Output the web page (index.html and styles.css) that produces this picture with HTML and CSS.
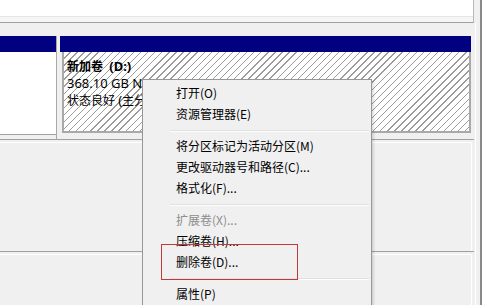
FILE: index.html
```html
<!DOCTYPE html>
<html lang="zh-CN">
<head>
  <meta charset="UTF-8" />
  <title>磁盘管理</title>
  <link rel="stylesheet" href="styles.css">
</head>
<body>
  <div class="window">
    <div class="list-pane"></div>

    <div class="graph-pane">
      <div class="disk-row">
        <div class="disk-label">
          <div class="bar"></div>
          <div class="label-box"></div>
        </div>
        <div class="partition">
          <div class="bar"></div>
          <div class="part-box">
            <div class="part-name">新加卷 &nbsp;<span class="latin">(D:)</span></div>
            <div><span class="latin">368.10 GB NTFS</span></div>
            <div>状态良好 <span class="latin">(</span>主分区<span class="latin">)</span></div>
          </div>
        </div>
      </div>
      <div class="disk-row empty"><div class="inner"></div></div>
      <div class="disk-row empty last"><div class="inner"></div></div>
    </div>

    <div class="context-menu">
      <div class="item">打开(O)</div>
      <div class="item">资源管理器(E)</div>
      <div class="sep"></div>
      <div class="item">将分区标记为活动分区(M)</div>
      <div class="item">更改驱动器号和路径(C)...</div>
      <div class="item">格式化(F)...</div>
      <div class="sep"></div>
      <div class="item disabled">扩展卷(X)...</div>
      <div class="item">压缩卷(H)...</div>
      <div class="item">删除卷(D)...</div>
      <div class="sep"></div>
      <div class="item">属性(P)</div>
      <div class="highlight"></div>
    </div>
  </div>
</body>
</html>
```

FILE: styles.css
```css
* {
  box-sizing: border-box;
}

html, body {
  margin: 0;
  height: 305px;
  overflow: hidden;
  background: #fff;
}

body {
  font-family: "Noto Sans", "Noto Sans CJK SC", sans-serif;
  font-size: 12px;
  color: #000;
}

.window {
  position: relative;
  width: 482px;
  height: 305px;
  overflow: hidden;
  background: #f0f0f0;
  border-right: 2px solid #8a8a8a;
}

.list-pane {
  width: 474px;
  height: 23px;
  background: #fff;
  border-bottom: 1px solid #a0a0a0;
  border-right: 1px solid #b8b8b8;
  box-shadow: inset 0 -5px 0 #f6f6f6, inset 0 -6px 0 #e6e6e6;
}

.graph-pane {
  width: 476px;
  padding-top: 13px;
  border-right: 1px solid #fff;
}

.disk-row {
  display: flex;
  width: 474px;
  height: 104px;
  border-bottom: 1px solid #a0a0a0;
}

.bar {
  height: 16px;
  background: #000080;
}

.disk-label {
  width: 57px;
  border-right: 1px solid #a8a8a8;
}

.label-box {
  height: 83px;
  background: #fff;
  border-bottom: 1px solid #a0a0a0;
}

.partition {
  width: 411px;
  margin-left: 3px;
}

.part-box {
  height: 81px;
  margin-left: 2px;
  padding: 6px 0 0 3px;
  line-height: 17px;
  border: 2px solid #a9a9a9;
  border-top: none;
  white-space: nowrap;
  overflow: hidden;
  background: repeating-linear-gradient(135deg, #fff 0, #fff 4px, #9c9c9c 4px, #9c9c9c 5px);
}

.part-box .latin {
  font-size: 13px;
}

.part-name {
  font-weight: bold;
}

.disk-row.empty {
  height: 112px;
  padding: 2px 2px 0 0;
}

.disk-row.empty .inner {
  width: 100%;
  height: 100%;
  border-top: 1px solid #fff;
  border-right: 1px solid #fff;
}

.disk-row.last {
  border-bottom: none;
}

.context-menu {
  position: absolute;
  left: 142px;
  top: 79px;
  width: 230px;
  height: 226px;
  padding: 2px;
  background: #f0f0f0;
  border: 1px solid #979797;
  border-bottom: none;
  font-family: "Noto Sans CJK SC", sans-serif;
  box-shadow: 2px 2px 2px rgba(0, 0, 0, 0.12);
}

.item {
  height: 21px;
  line-height: 21px;
  padding-left: 31px;
  white-space: nowrap;
}

.item.disabled {
  color: #8d8d8d;
}

.sep {
  height: 11px;
  margin-left: 25px;
  padding-top: 6px;
}

.sep::before {
  content: "";
  display: block;
  height: 1px;
  background: #e0e0e0;
  border-bottom: 1px solid #fff;
  box-sizing: content-box;
}

.highlight {
  position: absolute;
  left: 18px;
  top: 164px;
  width: 137px;
  height: 36px;
  border: 1px solid #c0393b;
}
```
